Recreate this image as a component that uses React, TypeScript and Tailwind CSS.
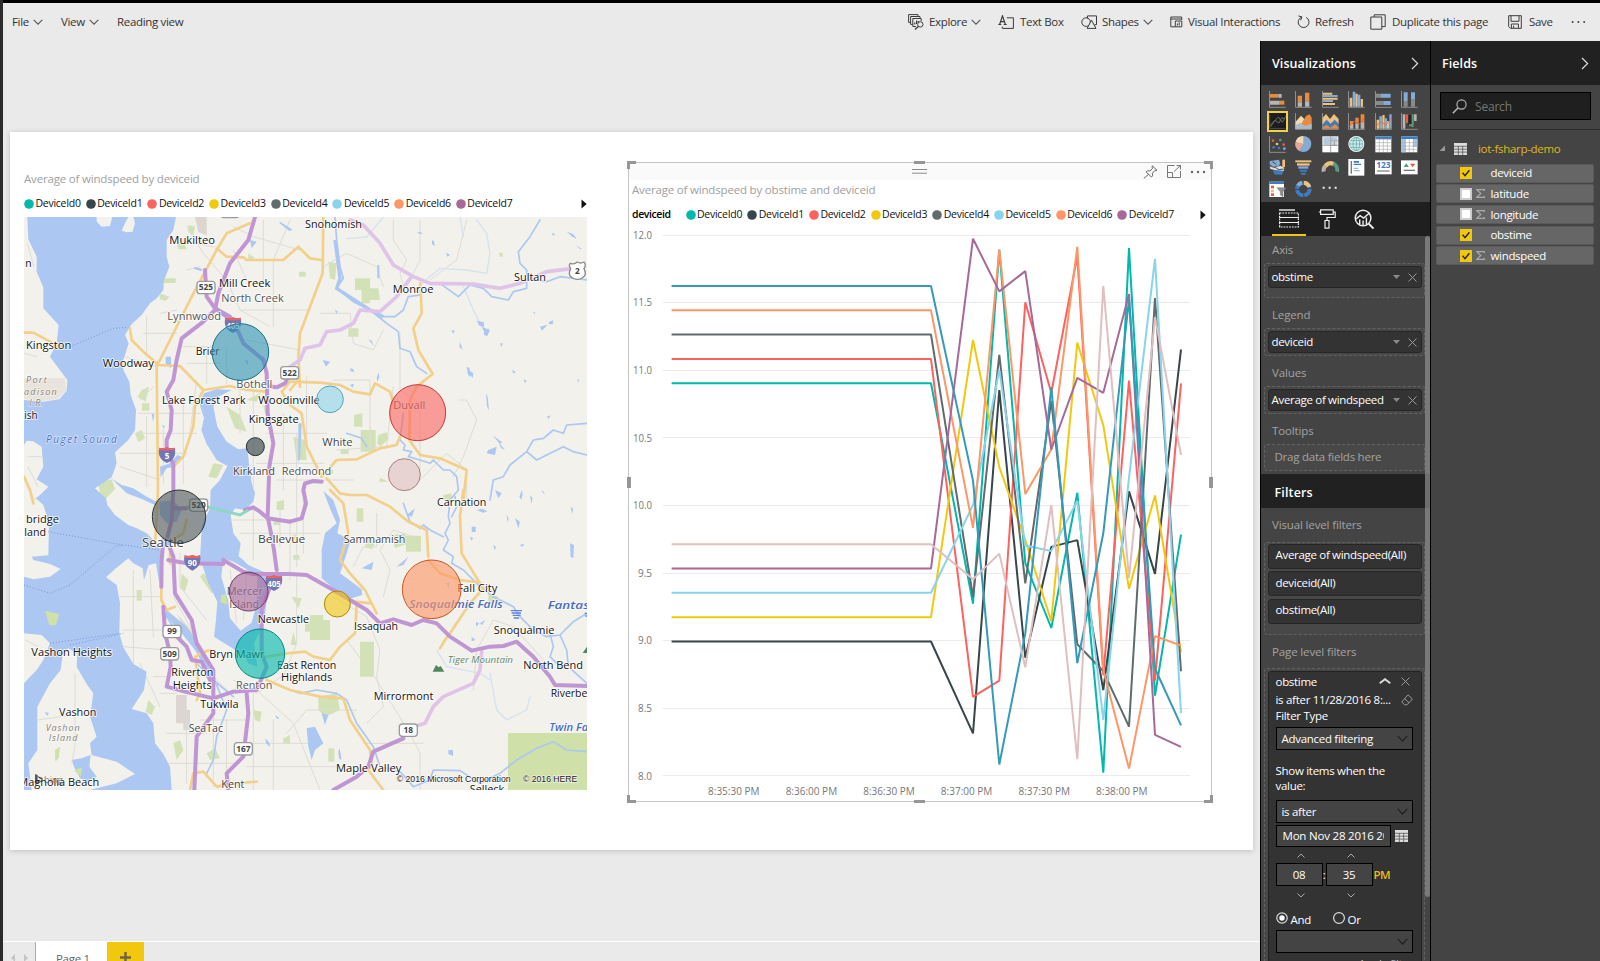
import React from "react";

const COLORS = {
  teal: "#01B8AA",
  dark: "#374649",
  red: "#FD625E",
  yellow: "#F2C80F",
  gray: "#5F6B6D",
  sky: "#8AD4EB",
  orange: "#FE9666",
  purple: "#A66999",
  blue: "#3599B8",
  pink: "#DFBFBF",
};

const DEVICES = [
  COLORS.teal,
  COLORS.dark,
  COLORS.red,
  COLORS.yellow,
  COLORS.gray,
  COLORS.sky,
  COLORS.orange,
  COLORS.purple,
];

/* ---------------------------------------------------------------- toolbar */

function Chevron({ className = "" }: { className?: string }) {
  return (
    <svg className={className} width="10" height="6" viewBox="0 0 10 6" fill="none" stroke="#555" strokeWidth="1.1">
      <path d="M0.7 0.8 5 5.1 9.3 0.8" />
    </svg>
  );
}

function MenuButton({ label, width, chevron, icon, iconWidth = "w-[22px]" }: {
  label: string; width: string; chevron?: boolean; icon?: React.ReactNode; iconWidth?: string;
}) {
  return (
    <button className={`flex shrink-0 items-center whitespace-nowrap ${width}`}>
      {icon && <span className={`flex shrink-0 ${iconWidth}`}>{icon}</span>}
      <span>{label}</span>
      {chevron && <Chevron className="ml-[4px] shrink-0" />}
    </button>
  );
}

const line = { fill: "none", stroke: "#3c3c3c", strokeWidth: 1 };

const ExploreIcon = (
  <svg width="16" height="16" viewBox="0 0 16 16" {...line}>
    <path d="M10 2.5V.6H.6v7.8h2M12 4.5V2.5H2.6v7.9H4.8M13.2 7V4.5H4.8v8H8" />
    <path d="M6.8 10.5v-2M8.6 10V6.6M10.4 8.5V7" strokeWidth="1.2" />
    <circle cx="12.3" cy="10.4" r="2.7" fill="#eaeaea" />
    <path d="M10.3 12.4 7 15.4" strokeWidth="1.4" />
  </svg>
);
const TextBoxIcon = (
  <svg width="17" height="15" viewBox="0 0 17 15" {...line}>
    <path d="M.3 9.5h3M5.7 9.5h3M1.6 9.5 4.5.9l2.9 8.6M2.6 6.7h3.9" strokeWidth="1.2" />
    <path d="M8.8 2.8h6.6v10.6H4.3v-1.8" />
  </svg>
);
const ShapesIcon = (
  <svg width="17" height="15" viewBox="0 0 17 15" {...line}>
    <path d="M6.5 3.4V.9h9v8.8h-2" />
    <circle cx="5.1" cy="7.1" r="4.3" />
    <path d="M10.5 5.2 15 13.4H6.1z" fill="#eaeaea" />
  </svg>
);
const InteractionsIcon = (
  <svg width="13" height="12" viewBox="0 0 13 12" {...line}>
    <path d="M11.7 4V1H.8v9.8h4.4M.8 3h10.9" />
    <path d="M5.3 5h6.5v5.8H5.3zM7.3 9.5v-2M9.2 9.5V6.2" />
  </svg>
);
const RefreshIcon = (
  <svg width="13" height="14" viewBox="0 0 13 14" {...line}>
    <path d="M4.6 2.1a5.4 5.4 0 1 0 4.6.3M1.4.9l3.5 1-1.2 3.4" />
  </svg>
);
const DuplicateIcon = (
  <svg width="16" height="16" viewBox="0 0 16 16" {...line}>
    <path d="M4.2 3V.8h11v11.8H12" />
    <path d="M.8 3h11v12.2H.8z" />
  </svg>
);
const SaveIcon = (
  <svg width="14" height="14" viewBox="0 0 14 14" {...line}>
    <path d="M.7.7h12.6v12.6H2.4L.7 11.6zM3 .7v5.6h8V.7M3.4 13.3V9h7v4.3M5.6 13V10.6" />
  </svg>
);

function Toolbar() {
  return (
    <div className="flex h-[38px] shrink-0 items-center pl-[9px] text-[11.5px] tracking-[-0.33px] text-[#333]">
      <MenuButton label="File" width="w-[49px]" chevron />
      <MenuButton label="View" width="w-[56px]" chevron />
      <MenuButton label="Reading view" width="w-[791px]" />
      <MenuButton label="Explore" width="w-[90px]" chevron icon={ExploreIcon} iconWidth="w-[21px]" />
      <MenuButton label="Text Box" width="w-[83px]" icon={TextBoxIcon} />
      <MenuButton label="Shapes" width="w-[89px]" chevron icon={ShapesIcon} iconWidth="w-[21px]" />
      <MenuButton label="Visual Interactions" width="w-[127px]" icon={InteractionsIcon} iconWidth="w-[18px]" />
      <MenuButton label="Refresh" width="w-[73px]" icon={RefreshIcon} iconWidth="w-[18px]" />
      <MenuButton label="Duplicate this page" width="w-[138px]" icon={DuplicateIcon} iconWidth="w-[22px]" />
      <MenuButton label="Save" width="w-[63px]" icon={SaveIcon} iconWidth="w-[21px]" />
      <svg width="16" height="4" viewBox="0 0 16 4" fill="#444">
        <circle cx="1.6" cy="2" r="1" /><circle cx="7.4" cy="2" r="1" /><circle cx="13.2" cy="2" r="1" />
      </svg>
    </div>
  );
}

/* -------------------------------------------------------------------- map */

const WATER = [
  "M82 51H528L520 90 500 120 500 170 508 200 492 240 490 270 470 295 450 310 425 345 395 372 375 405 386 430 370 480 370 510 388 545 392 585 408 630 405 690 385 720 345 757 350 790 335 832 308 850 285 865 318 895 322 915 345 945 385 975 410 985 440 1000 462 1022 482 1050 484 1090 478 1150 468 1090 446 1095 432 1140 428 1105 400 1090 385 1075 345 1107 318 1132 350 1155 360 1210 358 1300 370 1342 400 1392 440 1415 432 1470 395 1527 440 1540 460 1570 465 1630 490 1662 510 1700 515 1770 H72 V1450 L110 1410 130 1380 150 1330 125 1305 72 1300 V1130 L100 1138 150 1130 182 1107 150 1092 100 1080 95 1070 145 1066 147 970 130 915 108 895 120 885 145 860 110 838 130 800 125 740 100 724 80 722 72 735 V600 L130 605 178 598 200 572 202 540 150 470 170 430 176 375 130 325 130 262 110 215 110 170 85 118z",
  "M598 610 612 580 650 568 695 570 655 590 640 620 652 680 680 725 715 748 742 745 748 800 755 850 765 880 760 905 735 930 705 925 692 945 700 1000 722 1030 716 1068 745 1095 800 1120 802 1180 792 1270 762 1330 772 1400 745 1390 735 1368 690 1340 642 1310 648 1260 652 1205 625 1150 600 1075 606 975 630 925 632 870 660 840 682 798 650 780 620 732 604 690 612 655z",
  "M970 873 1000 900 1020 960 1012 1000 1052 1020 1040 1060 1020 1120 1085 1168 1087 1185 1050 1196 1000 1165 965 1135 965 1050 975 1000 1010 970 992 930z",
  "M480 800 510 790 532 765 545 770 520 800 500 805 482 832zM478 905 520 900 545 930 530 965 500 970 480 945zM335 836 365 855 400 865 440 890 470 905 465 915 420 895 380 880z",
  "M500 1230 560 1280 600 1340 640 1430 628 1432 585 1350 545 1300 496 1245zM497 470h16v34l-16-12zM895 670h10l-4 100-6 20zM920 1585 945 1580 960 1610 970 1630 945 1650 935 1680 925 1640zM965 1540 985 1545 975 1575zM1220 945 1245 925 1235 950z",
  "M1085 1105 1120 1085 1115 1110zM1190 1100 1225 1070 1210 1095zM1445 380 1470 390 1460 410zM1405 510 1420 520 1418 535zM1465 750 1490 740 1485 765 1460 760zM750 120 770 125 755 145zM583 200 607 207 605 213 583 208zM968 480 990 485 978 500zM1485 870 1505 880 1495 895zM1545 955 1560 965 1555 985zM1710 1030 1722 1035 1720 1075 1712 1070zM1415 980h12v16h-12z",
  "M1430 362l22 5 0 14-14-4zM1452 395l14-10-4 22-10-2zM1354 390l10 2-4 10zM1620 380l22-6-16 18zM1648 365l12-4-2 12-12-1zM1380 425l-2 16 10 8zM1500 430l8 0-4 12zM1400 500l8 4 6 28-10-8zM1458 580l5 10 4 40-6-10zM1478 706l30 22-10 2zM1495 725l20 25-12-6zM1535 510l12 5-6 6zM1570 538l10 4-4 8zM1640 650l12-4-6 10zM1732 538l6 2-4 8zM1296 120l6 4 2 14-8-6zM1338 158l12 6-8 6zM1655 98l10 4-6 6zM1700 95l20 8 10 14-12-6zM1728 135l12 12 6 0zM1250 95l20 4-10 4zM1132 195h6v40h-6zM1600 335l6 2-4 6z",
  "M1050 555l12-4-4 12zM1130 535l6-18 2 14-6 14zM1050 505l10 2 2 10-10-4zM1105 418l10 4 6 16zM1005 330l8 4-4 8zM1430 930l16-4 16 8-12 4zM1520 945l6 10-4 12zM1558 890l8-20 2 14-4 16zM1590 885l8 10-4 16zM1625 868l10 14-6-2zM1712 920l8 6-4 16zM1480 1035l8 6-4 10zM1560 1035l14-4-8 10zM1410 1010l10 4-6 8zM1340 1150l8-4-2 20zM1345 1650h14v18l-14-6zM1428 1265l10 6-10 8zM1015 1655l4-10 6 36-8-6zM795 1615l12 12 4 14-12-10zM825 1545l14 10-8 2zM1415 1310l12 10-12 4zM1440 1270l16-10-10 16zM455 640l8 4-4 22zM486 675l8 2-2 10zM735 480l10 2-2 14zM785 470l6-2-6 18zM840 65l38 24-10 4-30-24z",
];

const ISLANDS = [
  "M290 51H337L330 78 305 80 290 65zM365 92 375 70 385 51H400L405 70 398 95 380 97z",
  "M205 1345 232 1362 230 1400 262 1455 280 1480 270 1550 290 1610 270 1630 275 1665 350 1685 405 1722 350 1750 270 1770 H95 L85 1690 112 1650 112 1520 150 1450 182 1410 188 1362z",
  "M670 1075 700 1085 735 1105 772 1130 770 1210 755 1268 722 1292 690 1255 684 1200 664 1130z",
];

const GREENS = [
  "M492 235h35v14h-35zM425 570l22-10-10 45-24-15zM426 610h22v22h-22zM680 620l40 25 20 50-35-10zM405 700l20-10 10 25-20 12zM740 600l40-20-10 25zM295 850l40-12 10 30-40 40zM640 790l30 5-20 40-25-5z",
  "M1065 235h45v30h25l5 35h-30v10h-25v-40h-20zM1045 385h30l0 25h-30zM1062 645l25-5v40h-25zM1082 690h45v65h-45zM897 215h20v15h-20zM985 185l25 5-5 50-15-5zM880 710l35 10 5 60h-30z",
  "M1218 1007h45v48h-45zM930 1245h40v15h20v60h-60v-25h-15v-30h15zM1080 1325h42v105h-42zM1175 1005l40-5 10 30-40 15zM955 1490l55-10 10 50-45 20-20-20zM875 1190l30 5-10 30zM1465 1180l30 10-5 20-25-5zM1330 885l25-5v20h-25zM1070 925l20 0v40h-20z",
  "M545 1120l20 20-10 35-15-10zM600 1130l10-10 45 50-20 10zM410 1170h15v32h-15zM620 1660l25-15 15 30-30 5zM520 1630l20-10 10 30-20 30zM850 1615l20-10v25h-20zM760 1530l25 5-5 30-15-5zM655 1185l15-5 12 30-25 10zM700 900h40v25h-35zM830 905l22-5v30h-22zM445 1500l20 20-10 25-18-10z",
  "M790 615l20 10-14 20zM745 160l20 14-20 8zM530 130l24 4 6 14-24 0zM565 75l20 5-5 25-15-8zM478 280l30 10-10 12-18-4zM1498 158h10v12h-10zM1135 705l25-8 6 20-24 22-10-8zM1022 748h24v14h-24zM985 810h14v12h-14zM870 1010l20-8 0 20zM880 1065h18v14h-18zM1100 1010l26 16-10 22-20-6zM880 1295l10 40h-18zM985 1645h18v40h-18zM1165 845l-28 0 4-12zM360 985l14 6-6 14zM820 955h20v20h-20z",
];

const MINOR = [
  "M72 460 110 470M420 600 460 560M375 470 470 500M440 350v110M430 400h100M560 80l50 80 60 70M530 120 640 140M560 210 600 200M530 330 480 340M700 80 760 110 900 150M700 150 740 240 790 260M790 60v190M870 60l-50 120v200M680 240 720 330 810 380M720 330h210M740 420 900 450",
  "M415 640H600M410 700H590M360 760H560M360 800l120 40M440 650v210M490 690v160M550 600v250M590 540l-20 160M620 450v100M680 440v110M550 440h90M560 490h100M720 560v140M760 560v300M850 640v230M800 700h180M770 790h200M830 840h230M890 700v400",
  "M970 200l70-40 90 40 20 60M1180 60v60l40 60-20 40 10 40M1260 60l0 120-20 40M1400 60l-30 120-80 60M960 340l90 0 10 90 60 20 30-60M1180 560l-20 180-150 10M920 530v200M1000 540h110v200",
  "M1260 840l80-80 60 50 0 90M1200 400l0 170 60 40 0 200M1380 600h20l30 60-40 110-30 60M1240 1010l-60-20-40 60 30 60-20 80",
  "M340 950l60 90M400 1110v280M360 1190h120M370 1290h130M370 1340l130 10M420 1390l60 130M460 1430h60M450 1110l10 200M540 1060v100l80 100M520 1190l100 180M480 1480h50M560 1540v210M500 1600h120M640 1540v220M480 1690h240M600 1560h150M680 1560v210M760 1480v290M820 1560v210M740 1630h190M740 1700h320M780 1480l100 90 80 200",
  "M700 960h180M720 1000h240M760 920v160M840 930v110M870 960v180M910 900v160M700 1440l70 40 90-60M640 1430l60 60M890 1130v200l-40 100M1000 1190l100 60 40 100-10 80 20 90-50 50M1040 1320l90 120 100 160 30 60v110M1130 940v100h-40l-30 60M1430 1350l-10 120M1430 1350l50-90 60 20 90 100M1090 1630h180M860 1600l60-70 150 0",
  "M100 900l40-20M84 800l30 60M84 770h40M75 1320l40 20M130 1520l90 10 40-20M225 1420l0 220-10 60M210 1400v60M110 1740l100 0M300 1740l60-30M82 130l20 70",
];

const FAINT_RIVERS = [
  "M1430 60l30 40 10 60-10 60-60-10-80-5-60 50M1390 260l30 70 20 40M1150 51l-50 60-60 5M1470 1420 1490 1530 1520 1560 1580 1530 1590 1490M1310 1350 1340 1400 1440 1420 1470 1440M1380 50l10 60",
];

const RIVERS = [
  "M1005 51 1010 120 1020 200 1030 235 1010 265 1060 305 1110 330 1140 350 1185 350 1210 330 1225 290 1260 285",
  "M1110 330 1160 370 1195 395 1200 445 1230 455 1250 500 1280 520",
  "M1320 250 1375 290 1410 255 1450 265 1475 290 1525 300 1540 275 1580 265 1580 210 1560 190 1555 155 1590 110 1620 60",
  "M1580 235 1640 245 1680 230 1761 240",
  "M1210 910 1230 965 1260 985 1270 975 1290 990 1330 1010M1210 640 1200 720 1215 735 1210 750 1235 755 1225 770 1260 780 1290 790 1300 780 1330 810 1350 810 1370 830 1375 870 1350 900 1345 950 1350 970 1335 1000 1345 1020 1330 1050 1360 1070 1355 1090 1390 1110 1440 1160 1480 1190 1540 1220 1560 1250 1600 1290",
  "M1470 900 1480 840 1510 830 1530 795 1580 755 1600 720 1630 715 1660 690 1690 700 1700 675 1761 670M1580 755 1610 780 1640 765 1690 740 1720 755 1761 765M1355 950 1370 920 1365 890",
  "M1600 1290 1640 1310 1680 1305 1720 1265 1761 1240M1680 1305 1700 1350 1705 1400 1761 1450M1650 1300 1660 1340 1650 1370 1680 1400",
  "M870 1470 900 1480 950 1470 1010 1480 1040 1500 1070 1570 1120 1640 1140 1700 1200 1715 1240 1760 1290 1740 1300 1710 1380 1712 1440 1750 1500 1720 1550 1680 1610 1645 1660 1625 1700 1650 1761 1655",
  "M640 1430 660 1480 680 1530 650 1610 640 1680 620 1720M500 1250 540 1310 580 1380 640 1440 700 1490M1040 700 1085 715 1100 740",
];

const YELLOW_ROADS = [
  "M750 70 680 100 650 150 570 300 480 480 470 495 474 870 465 1040",
  "M650 145 680 170 730 172 740 180 850 180 895 140M895 140 930 175 965 180M970 51 968 220 900 400 895 470 900 560",
  "M390 385 395 420 430 455 470 490M470 495 540 498 610 570 690 558 740 570 800 575",
  "M610 570 585 620 580 680 550 770 520 800M850 570 870 545M845 575 870 615 905 640 920 740 965 830",
  "M72 398H100L160 430 175 440M72 830 90 870 100 910",
  "M870 545 960 548 1020 555 1060 575 1110 583 1125 550 1170 575 1180 610",
  "M870 570 895 540M1260 250 1262 270 1265 340 1240 385 1255 450 1298 522 1250 560 1230 600 1228 720 1260 765 1320 775 1400 810 1390 900",
  "M965 830 1010 780 1070 778 1140 745 1190 735 1200 710M980 835 1020 880 1050 885 1100 885 1170 920 1225 965 1280 990 1285 1070M990 870 1030 910 1045 1000 1020 1080 1050 1120 1095 1170 1110 1200 1130 1240M1065 1205 1115 1210M1070 1210 1068 1260M1070 1210 1065 1300 1020 1340 990 1380 940 1370 915 1355 860 1360 800 1370M1390 870 1380 950 1385 1060 1440 1150 1450 1165 1410 1210 1350 1300 1335 1320 1320 1345",
  "M1285 1080 1320 1120 1380 1140 1440 1148",
  "M800 1440 870 1470 960 1490 1030 1495 1050 1560 1110 1650 1115 1690 1105 1710 1150 1770",
  "M485 1080 484 1200 500 1230 525 1220M560 960 550 1000 500 1030M510 1060v30M585 1370 600 1480 590 1500M630 1350 600 1360 580 1380M570 1770 580 1720 610 1715 650 1760 700 1750 770 1745",
];

const LIGHT_PURPLE = [
  "M1050 60 1090 75 1140 130 1180 195 1240 230 1290 250 1420 252 1500 265 1560 250 1640 215 1720 205",
  "M1235 230 1190 290 1140 335 1080 330 1060 370 1020 390 980 395 960 435 915 445 900 480 870 500",
  "M1445 1355 1440 1410 1420 1450 1330 1490 1300 1520 1275 1570 1240 1580",
];

const PURPLE = [
  "M765 51 745 120 690 190 655 280 645 330 610 365 545 415 530 480 520 540 500 575 515 630 512 690 500 720 500 760 520 790 520 870 515 960 500 1020 520 1070 525 1180 575 1260 590 1330 640 1410 640 1480 640 1540 590 1610 583 1770",
  "M615 210 620 290 645 325 690 350M645 325 680 350 715 395 730 430 790 480 800 520 803 640 820 730 808 800 803 950 815 1010 822 1050 830 1110",
  "M490 1020 485 1080 484 1160M490 1220 495 1300 510 1360 512 1400 500 1460 555 1475 640 1495 700 1475 770 1470 800 1400 785 1360 785 1230 810 1160",
  "M530 1310 560 1340 575 1380 605 1385 630 1440M740 1480 745 1540 730 1670 680 1720 685 1770",
  "M505 1080 560 1090 670 1092M670 1080 730 1115 760 1122 870 1122 920 1125 1000 1170 1100 1230 1140 1270 1180 1258 1235 1275 1270 1260 1310 1270 1350 1310 1415 1352 1470 1340 1510 1338 1550 1325 1600 1370 1650 1430 1665 1455 1761 1458",
  "M1210 1615 1120 1655 1105 1700 1070 1730 1000 1770",
  "M735 930 760 922 780 935 803 955 870 965 905 955 918 910 910 870 915 850 940 843 965 845M525 925 560 925M800 558 830 562 855 550 865 530",
];

const SHIELD_CITY = [
  { t: "525", x: 618, y: 262 }, { t: "522", x: 869, y: 518 }, { t: "520", x: 596, y: 915 },
  { t: "99", x: 516, y: 1294 }, { t: "509", x: 509, y: 1361 }, { t: "167", x: 730, y: 1646 },
  { t: "18", x: 1225, y: 1590 }, { t: "", x: 690, y: 34 },
];
const SHIELD_INTER = [
  { t: "405", x: 699, y: 374 }, { t: "5", x: 501, y: 764 }, { t: "90", x: 577, y: 1087 }, { t: "405", x: 822, y: 1148 },
];

type Label = [string, number, number, number, string?];
const PLACES: Label[] = [
  ["Snohomish", 915, 1086, 84], ["Mukilteo", 508, 645, 131], ["Mill Creek", 657, 811, 259],
  ["North Creek", 664, 851, 306, "#555"], ["Lynnwood", 502, 663, 359, "#555"], ["Brier", 587, 659, 464],
  ["Kingston", 78, 214, 446], ["Woodway", 308, 462, 499], ["Bothell", 709, 817, 562, "#555"],
  ["Lake Forest Park", 486, 737, 610], ["Woodinville", 775, 960, 610], ["Kingsgate", 746, 896, 668],
  ["Kirkland", 699, 825, 825, "#444"], ["Redmond", 845, 994, 825, "#555"], ["n", 76, 95, 200], ["ish", 73, 113, 656],
  ["Monroe", 1178, 1300, 277], ["Sultan", 1542, 1638, 241], ["Duvall", 1180, 1276, 627, "#555"],
  ["White", 967, 1058, 737, "#444"], ["Carnation", 1311, 1459, 918], ["bridge", 78, 177, 968], ["land", 73, 138, 1006],
  ["Bellevue", 774, 916, 1028, "#444"], ["Sammamish", 1031, 1216, 1029, "#444"], ["Mercer", 680, 789, 1184, "#555"],
  ["Island", 688, 777, 1222, "#555"], ["Newcastle", 773, 927, 1267], ["Fall City", 1372, 1492, 1174],
  ["Issaquah", 1062, 1194, 1290], ["Snoqualmie", 1481, 1663, 1302], ["North Bend", 1570, 1749, 1406],
  ["Riverbend", 1652, 1800, 1489], ["Mirrormont", 1121, 1300, 1500], ["Maple Valley", 1008, 1204, 1715],
  ["Vashon Heights", 94, 336, 1368], ["Bryn Mawr", 628, 793, 1373], ["East Renton", 831, 1009, 1405],
  ["Highlands", 843, 997, 1442], ["Riverton", 514, 640, 1428], ["Heights", 518, 635, 1465], ["Renton", 708, 817, 1465, "#555"],
  ["Tukwila", 601, 716, 1524], ["Vashon", 177, 289, 1546], ["SeaTac", 566, 669, 1594, "#444"],
  ["Magnolia Beach", 55, 298, 1757], ["Kent", 664, 733, 1763, "#444"], ["Selleck", 1409, 1513, 1779],
];

const BUBBLES = [
  { x: 721, y: 456, r: 85, f: "#2a93b4", s: "#1c6e8a", o: 0.6 },
  { x: 990, y: 598, r: 40, f: "#8AD4EB", s: "#4fa6c0", o: 0.6 },
  { x: 1253, y: 638, r: 84, f: "#FD625E", s: "#c43733", o: 0.6 },
  { x: 766, y: 740, r: 27, f: "#374649", s: "#23302f", o: 0.65 },
  { x: 1213, y: 824, r: 48, f: "#DFBFBF", s: "#a88080", o: 0.6 },
  { x: 537, y: 950, r: 80, f: "#4b5658", s: "#2c3536", o: 0.6 },
  { x: 746, y: 1175, r: 58, f: "#A66999", s: "#6f3b65", o: 0.62 },
  { x: 1012, y: 1212, r: 39, f: "#F2C80F", s: "#ad8c00", o: 0.6 },
  { x: 1295, y: 1168, r: 88, f: "#FE9666", s: "#cc5520", o: 0.62 },
  { x: 780, y: 1361, r: 74, f: "#01B8AA", s: "#01897e", o: 0.62 },
];

function Strokes({ paths, color, width }: { paths: string[]; color: string; width: number }) {
  return (
    <g fill="none" stroke={color} strokeWidth={width} strokeLinejoin="round" strokeLinecap="round">
      {paths.map((d, i) => <path key={i} d={d} />)}
    </g>
  );
}

function BubbleMap() {
  return (
    <svg className="block shrink-0" width="563" height="573" viewBox="72 51 1689 1719" fontFamily="'Open Sans', 'Noto Sans', sans-serif">
      <rect x="72" y="51" width="1689" height="1719" fill="#f2f1ec" />
      <path d="M1524 1599H1761V1770H1524z" fill="#cfe0a9" />
      <path d="M585 51h35v55l-25-10zM528 1485h32v45h10v60h-20v-20h-22zM530 1240l50 60 10 40-20-20z" fill="#ddd5d0" />
      <g fill="#d2e2b6">{GREENS.map((d, i) => <path key={i} d={d} />)}</g>
      <Strokes paths={MINOR} color="#dddcd5" width={3} />
      <Strokes paths={FAINT_RIVERS} color="#d6e1f2" width={4} />
      <g fill="#abc7f2">{WATER.map((d, i) => <path key={i} d={d} />)}</g>
      <path d="M72 535H145L195 535 198 572 172 596 130 602 72 597z" fill="#e8e3dc" />
      <g fill="#f2f1ec">{ISLANDS.map((d, i) => <path key={i} d={d} />)}</g>
      <path d="M215 1680 245 1675 272 1665 268 1700 290 1730 262 1745 240 1735 222 1700zM135 1535l12 5-6 8z" fill="#abc7f2" />
      <path d="M135 1232l43 10-10 34-20 0zM664 1185l14-5 4 34-22-8zM165 1650l15-10-4 35-10 10zM222 1710l25-8-5 28z" fill="#cfe0a9" />
      <path d="M225 1420V1640L215 1690M112 1560 220 1545M690 1110l20 160M740 1120l-10 140" stroke="#dddcd5" strokeWidth="3" fill="none" />
      <Strokes paths={RIVERS} color="#abc7f2" width={5} />
      <path d="M1005 120 1020 235 1010 265 1110 330 1150 350" stroke="#abc7f2" strokeWidth="10" fill="none" />
      <g stroke="#7a96d8" strokeWidth="3" strokeDasharray="3 6" fill="none">
        <path d="M215 438 340 385 385 382M145 995 350 1032 480 1050M72 1155 150 1180 210 1155 345 1040 370 1035M150 1330 360 1300M210 1335 370 1300" />
      </g>
      <Strokes paths={YELLOW_ROADS} color="#f3d08a" width={8} />
      <Strokes paths={LIGHT_PURPLE} color="#dfc3e8" width={11} />
      <Strokes paths={PURPLE} color="#c095d4" width={12} />
      <path d="M560 922 600 915 720 945 745 930" stroke="#8bd8c4" strokeWidth="9" fill="none" />
      {SHIELD_CITY.map((s, i) => (
        <g key={i}>
          <rect x={s.x - 27} y={s.y - 18} width="54" height="37" rx="9" fill="#fff" stroke="#9a9a9a" strokeWidth="4" />
          <text x={s.x} y={s.y + 9} fontSize="25" fontWeight="700" textAnchor="middle" fill="#444">{s.t}</text>
        </g>
      ))}
      <path d="M1712 190q10 5 20-4 10 6 20 0 8 8 0 20 10 20-6 28-6 4-14 4-8 0-14-4-16-8-6-28-8-12 0-16z" fill="#fff" stroke="#8a8a8a" strokeWidth="4" />
      <text x="1732" y="222" fontSize="25" fontWeight="700" textAnchor="middle" fill="#444">2</text>
      {SHIELD_INTER.map((s, i) => (
        <g key={i}>
          <path d={`M${s.x - 23} ${s.y - 21}q12 4 23-1 11 5 23 1 8 32-23 46-31-14-23-46z`} fill="#7176b4" />
          <path d={`M${s.x - 23} ${s.y - 21}q12 4 23-1 11 5 23 1v8h-46z`} fill="#f0605c" />
          <text x={s.x} y={s.y + 12} fontSize="24" fontWeight="700" textAnchor="middle" fill="#fff">{s.t}</text>
        </g>
      ))}
      <g fontSize="35" fontWeight="500" paintOrder="stroke" stroke="#ffffff" strokeOpacity="0.75" strokeWidth="6" strokeLinejoin="round">
        {PLACES.map(([t, a, b, y, c]) => (
          <text key={t + a} x={a} y={y + 1} textLength={b - a} lengthAdjust="spacingAndGlyphs" fill={c || "#111"}>{t}</text>
        ))}
        <text x="426" y="1041" fontSize="38" textLength="126" lengthAdjust="spacingAndGlyphs" fill="#444">Seattle</text>
      </g>
      <g fontStyle="italic" fontSize="30" fontWeight="500" paintOrder="stroke" stroke="#fff" strokeOpacity="0.6" strokeWidth="4">
        <text x="138" y="729" textLength="212" fill="#4a6cc4">Puget Sound</text>
        <g fill="#4a6cc4" fontWeight="600">
          <text x="1228" y="1223" textLength="280" lengthAdjust="spacingAndGlyphs">Snoqualmie Falls</text>
          <text x="1643" y="1226" textLength="170" lengthAdjust="spacingAndGlyphs">Fantastic</text>
          <text x="1648" y="1592" textLength="150" lengthAdjust="spacingAndGlyphs">Twin Falls</text>
        </g>
        <g fill="#877c72" fontSize="27">
          <text x="78" y="549" textLength="62">Port</text>
          <text x="72" y="585" textLength="98">adison</text>
          <text x="88" y="617" textLength="42">I.R.</text>
          <text x="137" y="1593" textLength="102">Vashon</text>
          <text x="146" y="1622" textLength="86">Island</text>
        </g>
        <text x="1343" y="1388" textLength="196" lengthAdjust="spacingAndGlyphs" fontSize="28" fill="#5a8a6c">Tiger Mountain</text>
      </g>
      <path d="M1298 1415 1308 1395 1316 1402 1322 1398 1333 1415zM1748 1359 1761 1340V1359z" fill="#4f8660" />
      <path d="M1532 1232h34M1535 1239h28M1538 1246h24M1541 1254h16M1754 1240h8M1756 1248h6" stroke="#5f83d8" strokeWidth="4" />
      {BUBBLES.map((b, i) => (
        <circle key={i} cx={b.x} cy={b.y} r={b.r} fill={b.f} fillOpacity={b.o} stroke={b.s} strokeWidth="3" />
      ))}
      <path d="M105 1722 113 1725V1748L126 1740 116 1734 113 1728 128 1734V1742L113 1752 105 1747z" fill="#333" opacity=".8" />
      <text x="132" y="1750" fontSize="28" fill="#555" opacity=".7">bing</text>
      <g fontFamily="'Liberation Sans', Arial, sans-serif" fontSize="28" fill="#222" paintOrder="stroke" stroke="#fff" strokeOpacity=".7" strokeWidth="4">
        <text x="1190" y="1745" textLength="342" lengthAdjust="spacingAndGlyphs">© 2016 Microsoft Corporation</text>
        <text x="1569" y="1745" textLength="163" lengthAdjust="spacingAndGlyphs">© 2016 HERE</text>
      </g>
    </svg>
  );
}

/* ------------------------------------------------------------- line chart */

const TIMES = [671.3, 930.7, 972.7, 999, 1025, 1051, 1077, 1103, 1128.7, 1154.7, 1180.7];
const SERIES: [string, number[]][] = [
  [COLORS.teal, [10.9, 9.27, 11.89, 9.57, 9.09, 10.09, 8.02, 11.9, 8.59, 9.78]],
  [COLORS.dark, [8.99, 8.31, 10.85, 8.87, 9.69, 9.74, 8.63, 10.1, 9.49, 11.15]],
  [COLORS.red, [11.08, 8.58, 8.7, 11.5, 10.83, 11.84, 8.74, 10.92, 8.7, 10.9]],
  [COLORS.yellow, [9.17, 11.22, 10.28, 9.74, 9.14, 11.2, 10.59, 9.38, 10.07, 8.91]],
  [COLORS.gray, [11.26, 9.32, 11.11, 9.42, 10.77, 8.97, 8.77, 8.36, 11.53, 8.77]],
  [COLORS.sky, [9.35, 10.0, 11.0, 9.7, 9.66, 10.03, 8.41, 10.2, 11.82, 8.46]],
  [COLORS.orange, [11.44, 9.83, 11.89, 10.08, 10.41, 11.91, 8.78, 8.05, 9.03, 8.96]],
  [COLORS.purple, [9.53, 11.97, 11.58, 11.73, 10.41, 10.94, 10.83, 11.56, 8.3, 8.21]],
  [COLORS.blue, [11.62, 10.18, 8.08, 9.05, 10.87, 8.83, 9.79, 11.52, 8.79, 8.37]],
  [COLORS.pink, [9.71, 9.45, 9.64, 8.8, 10.0, 8.12, 11.62, 9.46, 11.39, 10.37]],
];
const yOf = (v: number) => 234.6 + (12 - v) * 135.18;
const X_LABELS = ["8:35:30 PM", "8:36:00 PM", "8:36:30 PM", "8:37:00 PM", "8:37:30 PM", "8:38:00 PM"];

function LineChart() {
  const ticks = [12, 11.5, 11, 10.5, 10, 9.5, 9, 8.5, 8];
  return (
    <svg className="block shrink-0" width="582" height="575" viewBox="629 225 582 575" fontFamily="'Open Sans', 'Noto Sans', sans-serif" fontSize="10.5" fill="#777">
      {ticks.map((t) => (
        <g key={t}>
          <line x1="662.5" x2="1190" y1={Math.round(yOf(t)) + 0.5} y2={Math.round(yOf(t)) + 0.5} stroke="#ebebeb" />
          <text x="652" y={yOf(t) + 4.3} textAnchor="end" textLength={t >= 10 ? 19 : 14} lengthAdjust="spacingAndGlyphs">{t.toFixed(1)}</text>
        </g>
      ))}
      {X_LABELS.map((l, i) => (
        <text key={l} x={733.8 + i * 77.6} y="795.3" textAnchor="middle" textLength="51.5" lengthAdjust="spacingAndGlyphs">{l}</text>
      ))}
      {SERIES.map(([c, v]) => (
        <polyline
          key={c}
          fill="none"
          stroke={c}
          strokeWidth="2"
          strokeLinejoin="bevel"
          points={TIMES.map((x, i) => `${x + 0.3},${yOf(v[Math.max(0, i - 1)]).toFixed(1)}`).join(" ")}
        />
      ))}
    </svg>
  );
}

/* ----------------------------------------------------------------- canvas */

function Legend() {
  return (
    <div className="flex text-[10.5px] tracking-[-0.28px] text-[#111]">
      {DEVICES.map((c, i) => (
        <div key={c} className="flex w-[61.7px] shrink-0 items-center gap-[1.5px] whitespace-nowrap">
          <svg width="10" height="10" viewBox="0 0 10 10"><circle cx="5" cy="5" r="4.8" fill={c} /></svg>
          DeviceId{i}
        </div>
      ))}
    </div>
  );
}

const Arrow = () => <svg width="6" height="10" viewBox="0 0 6 10"><path d="M.5.5 5.7 5 .5 9.5z" fill="#111" /></svg>;

function MapVisual() {
  return (
    <section className="mt-[37px] w-[563px] shrink-0">
      <h2 className="h-[18px] text-[11.5px] leading-[19px] tracking-[-0.18px] text-[#a0a0a0]">Average of windspeed by deviceid</h2>
      <div className="flex h-[30px] items-center justify-between pt-[4px]">
        <Legend />
        <Arrow />
      </div>
      <BubbleMap />
    </section>
  );
}

function ChartVisual() {
  return (
    <section className="relative mt-[30px] h-[640px] w-[584px] shrink-0 border border-[#c4c4c4]">
      <div className="flex h-[17px] items-center bg-[#fafafa]">
        <svg className="ml-[283px]" width="15" height="5" viewBox="0 0 15 5" stroke="#8a8a8a"><path d="M0 .5h15M0 4.2h15" /></svg>
        <svg className="ml-[216px]" width="15" height="14" viewBox="0 0 15 14" fill="none" stroke="#666">
          <path d="M9.2.8 14 5.2l-1.2.5-1-.2-2.4 2.7.2 2.6-1.2 1.2L3.2 7l1.2-1.2 2.6.1 2.5-2.4-.3-1.2zM5.6 9.3.8 13.4" />
        </svg>
        <svg className="ml-[9px]" width="14" height="13" viewBox="0 0 14 13" fill="none" stroke="#777">
          <path d="M7.5.5H.5v12h13V6M.5 7.5h5v5M7 6.5 13.5.5M9.5.5h4v4" />
        </svg>
        <svg className="ml-[9px]" width="16" height="4" viewBox="0 0 16 4" fill="#666">
          <circle cx="2" cy="2" r="1.2" /><circle cx="8" cy="2" r="1.2" /><circle cx="14" cy="2" r="1.2" />
        </svg>
      </div>
      <h2 className="h-[20px] pl-[3px] text-[11.5px] leading-[19px] tracking-[-0.18px] text-[#a0a0a0]">Average of windspeed by obstime and deviceid</h2>
      <div className="flex h-[25px] items-center pl-[3px] pt-[5px]">
        <span className="w-[53.5px] shrink-0 text-[10.5px] font-semibold tracking-[-0.4px] text-black">deviceid</span>
        <Legend />
        <span className="ml-[21px]"><Arrow /></span>
      </div>
      <LineChart />
      <span className="absolute -left-[2px] -top-[2px] h-[8px] w-[9px] border-l-[3px] border-t-[3px] border-[#969696]" />
      <span className="absolute -right-[2px] -top-[2px] h-[8px] w-[9px] border-r-[3px] border-t-[3px] border-[#969696]" />
      <span className="absolute -bottom-[2px] -left-[2px] h-[8px] w-[9px] border-b-[3px] border-l-[3px] border-[#969696]" />
      <span className="absolute -bottom-[2px] -right-[2px] h-[8px] w-[9px] border-b-[3px] border-r-[3px] border-[#969696]" />
      <span className="absolute -top-[2px] left-[285px] h-[3px] w-[11px] bg-[#969696]" />
      <span className="absolute -bottom-[2px] left-[285px] h-[3px] w-[11px] bg-[#969696]" />
      <span className="absolute -left-[2px] top-[314px] h-[11px] w-[4px] bg-[#969696]" />
      <span className="absolute -right-[2px] top-[314px] h-[11px] w-[4px] bg-[#969696]" />
    </section>
  );
}

/* --------------------------------------------------- visualization gallery */

const O = "#e88b3c", G = "#b5b5b5", D = "#8a8a8a", Y = "#eec27c", B = "#84abd6", R = "#e0623c", BL = "#3d7cc0";
const axis = <path d="M1.5 0V49H50" stroke="#8f8f8f" strokeWidth="3" fill="none" />;

const GALLERY: React.ReactNode[] = [
  <g key="stacked-bar">{axis}<path d="M3 9h25v11H3z" fill={O} /><path d="M28 9h10v11H28zM3 29h27v12H3z" fill={G} /><path d="M3 20h10v0z" fill={G} /><path d="M30 29h16v12H30z" fill={O} /></g>,
  <g key="stacked-column">{axis}<path d="M8 14h13v20H8zM30 5h13v26H30z" fill={O} /><path d="M8 34h13v13H8zM30 31h13v16H30z" fill={G} /></g>,
  <g key="clustered-bar">{axis}<path d="M3 5h28v6H3zM3 20h44v6H3zM3 36h36v6H3z" fill={Y} /><path d="M3 12h44v6H3zM3 27h30v6H3z" fill={B} /></g>,
  <g key="clustered-column">{axis}<path d="M5 20h8v27H5zM22 8h7v39h-7zM38 24h7v23h-7z" fill={Y} /><path d="M14 2h8v45h-8zM29 11h8v36h-8z" fill={B} /></g>,
  <g key="full-bar">{axis}<path d="M3 8h15v12H3zM3 30h22v12H3z" fill={D} /><path d="M18 8h29v12H18zM25 30h22v12H25z" fill={B} /></g>,
  <g key="full-column">{axis}<path d="M8 4h12v26H8zM30 4h12v20H30z" fill={B} /><path d="M8 30h12v17H8zM30 24h12v23H30z" fill={D} /></g>,
  <g key="line"><path d="M2 6V47H50" stroke="#555" strokeWidth="2.5" fill="none" /><path d="M4 42 18 22 30 30 38 14 48 18M4 36 15 26 28 12 40 28 50 10" stroke="#777" strokeWidth="2.5" fill="none" /></g>,
  <g key="area">{axis}<path d="M2 26 18 8 34 24 48 20V47H2z" fill="#f3d9ae" /><path d="M20 30 34 8 44 4 50 14V47H14z" fill={O} /><path d="M2 36 16 30 30 38 50 32V47H2z" fill="#a9b9c9" /></g>,
  <g key="stacked-area">{axis}<path d="M2 14 12 3 24 18 36 3 50 18V34H2z" fill={Y} /><path d="M2 34 14 20 26 32 38 20 50 32V47H2z" fill={BL} /><path d="M2 42 14 36 26 44 38 34 50 42V47H2z" fill={O} /></g>,
  <g key="line-stacked">{axis}<path d="M6 24h10v12H6zM22 14h10v18H22zM38 4h11v24H38z" fill={O} /><path d="M6 34h10v13H6zM22 32h10v15H22zM38 28h11v19H38z" fill={G} /><path d="M2 42 20 24 34 34 50 14" stroke={R} strokeWidth="2.5" fill="none" /></g>,
  <g key="line-clustered">{axis}<path d="M5 20h8v27H5zM22 6h7v41h-7zM36 24h7v23h-7z" fill={Y} /><path d="M13 10h8v37h-8zM29 16h7v31h-7zM43 4h7v43h-7z" fill={B} /><path d="M2 40 18 26 32 36 50 14" stroke={R} strokeWidth="2.5" fill="none" /></g>,
  <g key="waterfall">{axis}<path d="M5 4h8v43H5zM39 4h8v20h-8z" fill={G} /><path d="M15 4h7v26h-7z" fill={R} /><path d="M22 6h10v32H22z" fill="#262626" /><path d="M24 34h8v6h-8zM32 4h6v38h-6z" fill="#5a9a80" /></g>,
  <g key="scatter">{axis}<circle cx="12" cy="14" r="4" fill={R} /><circle cx="34" cy="12" r="4" fill="#5a9a80" /><circle cx="24" cy="24" r="4" fill={Y} /><circle cx="14" cy="34" r="4" fill={BL} /><circle cx="30" cy="36" r="4" fill={BL} /><circle cx="44" cy="26" r="4" fill={R} /><circle cx="46" cy="38" r="4" fill={B} /></g>,
  <g key="pie"><circle cx="25" cy="24" r="24" fill={B} /><path d="M25 24V0A24 24 0 0 0 2 18z" fill="#f3d9ae" /><path d="M25 24 2 18A24 24 0 0 0 12 44z" fill="#e8a592" /></g>,
  <g key="treemap"><path d="M1 1h48v48H1z" fill="#fff" /><path d="M4 4h20v22H4zM27 4h19v10H27z" fill="#b4c9e2" /><path d="M27 17h9v12h-9zM38 17h8v12h-8z" fill="#c9d4e0" /><path d="M1 28h48M26 1v48M37 16v14M26 15h23" stroke="#777" strokeWidth="2" /></g>,
  <g key="map"><circle cx="25" cy="24" r="24" fill="#fff" /><circle cx="25" cy="24" r="20" fill="#d6ecf0" stroke="#58a39c" strokeWidth="2" /><ellipse cx="25" cy="24" rx="10" ry="20" fill="none" stroke="#58a39c" strokeWidth="2" /><path d="M5 24h40M8 14h34M8 34h34M25 4v40" stroke="#58a39c" strokeWidth="2" /></g>,
  <g key="table"><path d="M1 1h48v48H1z" fill="#fff" /><path d="M1 1h48v8H1z" fill={BL} /><path d="M1 20h48M1 30h48M1 40h48M13 9v40M25 9v40M37 9v40M1 10h48" stroke="#aaa" strokeWidth="2" /></g>,
  <g key="matrix"><path d="M1 1h48v48H1z" fill="#fff" /><path d="M1 1h48v8H1z" fill={BL} /><path d="M1 9h13v40H1zM36 9h13v24H36z" fill="#a8c4e4" /><path d="M1 20h48M1 30h48M1 40h48M13 9v40M25 9v40M37 9v40" stroke="#aaa" strokeWidth="2" /></g>,
  <g key="filled-map"><path d="M2 6 30 2 34 14 28 22 10 22 2 16z" fill={B} /><path d="M2 20 22 24 34 20 46 26 44 36 20 34 4 30z" fill="#ddd" /><path d="M12 34 44 36 38 48 16 46z" fill={BL} /><path d="M40 2h8v22h-8z" fill={Y} /><path d="M4 22 20 26 30 32 44 30M10 8l12 8" stroke="#333" strokeWidth="2.5" fill="none" /></g>,
  <g key="funnel"><path d="M1 4h48v6H1z" fill={Y} /><path d="M6 13h38v7H6z" fill={Y} /><path d="M10 22h30v7H10z" fill={B} /><path d="M14 32h22v6H14zM18 41h14v6H18z" fill={BL} /></g>,
  <g key="gauge"><path d="M5 38A20 20 0 0 1 14 18" stroke="#b9b3a0" strokeWidth="12" fill="none" /><path d="M11 20A20 20 0 0 1 35 15" stroke={Y} strokeWidth="12" fill="none" /><path d="M34 14A20 20 0 0 1 45 38" stroke="#5a9a80" strokeWidth="12" fill="none" /></g>,
  <g key="multi-card"><path d="M1 0h48v50H1z" fill="#fff" /><path d="M8 6h4v38H8z" fill="#777" /><path d="M17 6h16v5H17zM17 14h22v4H17z" fill={BL} /><path d="M17 26h14v4H17zM17 33h18v4H17z" fill="#9ab8dc" /></g>,
  <g key="card"><path d="M0 4h50v42H0z" fill="#fff" /><text x="25" y="28" fontSize="24" fontWeight="700" fill={BL} textAnchor="middle" textLength="43" lengthAdjust="spacingAndGlyphs">123</text><path d="M6 36h38" stroke="#888" strokeWidth="4" /></g>,
  <g key="kpi"><path d="M0 4h50v42H0z" fill="#fff" /><path d="M8 24 16 13 24 24z" fill="#5a9a80" /><path d="M27 14 43 14 35 25z" fill={R} /><path d="M8 34h34" stroke="#777" strokeWidth="4" /></g>,
  <g key="slicer"><path d="M1 2h44v46H1z" fill="#fff" /><path d="M1 2h44v7H1z" fill={BL} /><path d="M6 14h9v8H6z" fill={R} /><path d="M6 26h9v8H6z" fill={Y} /><path d="M6 37h9v8H6z" fill={R} /><path d="M24 20H52L42 32V47L34 42V32z" fill="#8f8f8f" stroke="#555" /></g>,
  <g key="donut" fill="none" strokeWidth="12"><circle cx="25" cy="24" r="19" stroke={BL} strokeDasharray="26 3" /><path d="M27 5A19 19 0 0 1 43 18" stroke={Y} /><path d="M9 14A19 19 0 0 1 22 5" stroke={B} /></g>,
  <g key="more" fill="#eee"><path d="M2 17h6v6H2zM20 17h6v6h-6zM38 17h6v6h-6z" /></g>,
];

function Gallery() {
  return (
    <div className="grid h-[117px] shrink-0 auto-rows-[22.7px] grid-cols-[repeat(6,26.4px)] pl-[8px] pt-[5.5px]">
      {GALLERY.map((g, i) => (
        <div key={i} className={i === 6 ? "-ml-[2px] -mt-[2px] flex h-[21px] w-[21px] items-center justify-center border-2 border-[#f0d24a] bg-[#1e1e1e]" : ""}>
          <svg className="block overflow-visible" width="17" height="17" viewBox="0 0 51 51">{g}</svg>
        </div>
      ))}
    </div>
  );
}

/* ------------------------------------------------------------------ panels */

function PanelHeader({ title }: { title: string }) {
  return (
    <div className="flex h-[44px] shrink-0 items-center justify-between bg-[#212121] px-[11px]">
      <h2 className="pt-[2px] text-[12.5px] font-semibold tracking-[0.08px] text-white">{title}</h2>
      <svg width="8" height="13" viewBox="0 0 8 13" fill="none" stroke="#ddd" strokeWidth="1.2"><path d="M1 1 6.6 6.5 1 12" /></svg>
    </div>
  );
}

function Cross() {
  return <svg width="9" height="9" viewBox="0 0 9 9" stroke="#999" strokeWidth="1"><path d="M.5.5 8.5 8.5M8.5.5.5 8.5" /></svg>;
}

function WellLabel({ children, className }: { children: React.ReactNode; className: string }) {
  return <div className={`flex items-center pl-[11px] text-[11.5px] tracking-[-0.14px] text-[#a3a3a3] ${className}`}>{children}</div>;
}

function Well({ children, className }: { children: React.ReactNode; className: string }) {
  return <div className={`ml-[3px] w-[161px] shrink-0 rounded-[3px] border border-dashed border-[#626262] bg-[#484848] p-[2.5px] ${className}`}>{children}</div>;
}

function FieldPill({ label }: { label: string }) {
  return (
    <div className="flex h-[22px] items-center rounded-[3px] border border-[#262626] bg-[#333] pl-[3px] pr-[4px]">
      <span className="flex-1 whitespace-nowrap text-[11.5px] tracking-[-0.31px] text-white">{label}</span>
      <svg className="mr-[8px] shrink-0" width="7" height="4" viewBox="0 0 7 4"><path d="M0 0h7L3.5 4z" fill="#8a8a8a" /></svg>
      <Cross />
    </div>
  );
}

function FilterPill({ label }: { label: string }) {
  return (
    <div className="mb-[2.3px] flex h-[25px] items-center rounded-[3px] border border-[#262626] bg-[#333] pb-[3px] pl-[7px] text-[11.5px] tracking-[-0.31px] text-white">{label}</div>
  );
}

function Select({ label, className = "" }: { label: string; className?: string }) {
  return (
    <div className={`flex h-[23px] w-[137px] items-center justify-between border border-black bg-[#444] pl-[5px] pr-[4px] text-[11.5px] tracking-[-0.29px] text-white ${className}`}>
      <span>{label}</span>
      <svg width="11" height="7" viewBox="0 0 11 7" fill="none" stroke="#222" strokeWidth="1.2"><path d="M.7.8 5.5 6 10.3.8" /></svg>
    </div>
  );
}

function Spin({ up }: { up?: boolean }) {
  return (
    <div className="flex w-[50px] justify-center">
      <svg width="8" height="5" viewBox="0 0 8 5" fill="none" stroke="#aaa"><path d={up ? "M.5 4.5 4 1l3.5 3.5" : "M.5.5 4 4 7.5.5"} /></svg>
    </div>
  );
}

function GridIcon({ className = "" }: { className?: string }) {
  return (
    <svg className={className} width="13" height="12" viewBox="0 0 13 12"><path d="M0 0h13v12H0z" fill="#ddd" /><path d="M0 3.3h13M0 6.2h13M0 9.1h13M4.3 3v9M8.7 3v9" stroke="#555" strokeWidth=".8" /></svg>
  );
}

function PageFilter() {
  return (
    <div className="h-[330px] rounded-t-[3px] border border-[#222] bg-[#333] pl-[7px] text-[11.5px] leading-[15px] tracking-[-0.29px] text-white">
      <div className="flex h-[19px] items-center">
        <span className="w-[103px]">obstime</span>
        <svg width="12" height="6" viewBox="0 0 12 6" fill="none" stroke="#ddd" strokeWidth="1.8"><path d="M.7 5.2 6 1.2 11.3 5.2" /></svg>
        <span className="ml-[10px]"><Cross /></span>
      </div>
      <div className="mt-px flex h-[16px] items-center whitespace-nowrap">
        <span className="w-[125px]">is after 11/28/2016 8:...</span>
        <svg width="12" height="12" viewBox="0 0 12 12" fill="none" stroke="#999"><path d="M7 .8 11.4 5 6 10.8H3.6L.8 8zM3.6 4.6 8 8.8" /></svg>
      </div>
      <div>Filter Type</div>
      <Select label="Advanced filtering" className="mt-[4px]" />
      <div className="mt-[13px]">Show items when the<br />value:</div>
      <Select label="is after" className="mt-[7px]" />
      <div className="mt-[2px] flex items-center">
        <div className="flex h-[22px] w-[115px] items-center overflow-hidden border border-black bg-[#444] px-[6px]">
          <span className="overflow-hidden whitespace-nowrap tracking-[-0.2px]">Mon Nov 28 2016 20:35</span>
        </div>
        <GridIcon className="ml-[4px]" />
      </div>
      <div className="mt-[6px] flex"><Spin up /><Spin up /></div>
      <div className="mt-[5px] flex items-center">
        <div className="flex h-[23px] w-[47px] items-center justify-center border border-black bg-[#444]">08</div>
        <span className="w-[3px] text-center">:</span>
        <div className="flex h-[23px] w-[47px] items-center justify-center border border-black bg-[#444]">35</div>
        <span className="ml-[1px] font-semibold tracking-[-0.6px] text-[#e8bc1c]">PM</span>
      </div>
      <div className="mt-[7px] flex"><Spin /><Spin /></div>
      <div className="mt-[12px] flex h-[17px] items-center">
        <svg width="13" height="13" viewBox="0 0 13 13"><circle cx="6" cy="6" r="5.2" fill="none" stroke="#ddd" strokeWidth="1.2" /><circle cx="6" cy="6" r="2.7" fill="#fff" /></svg>
        <span className="ml-[2px] w-[42px] pt-[2px]">And</span>
        <svg width="13" height="13" viewBox="0 0 13 13"><circle cx="6" cy="6" r="5.4" fill="none" stroke="#ddd" strokeWidth="1.2" /></svg>
        <span className="ml-[2px] pt-[2px]">Or</span>
      </div>
      <Select label="" className="mt-[3px]" />
      <div className="mt-[3px] pl-[83px] text-[#bbb]">Apply filter</div>
    </div>
  );
}

function VisualizationsPanel() {
  return (
    <aside className="flex h-[920px] w-[171px] shrink-0 flex-col overflow-hidden border-x border-black bg-[#444]">
      <PanelHeader title="Visualizations" />
      <Gallery />
      <div className="flex h-[33.5px] shrink-0 items-start bg-[#1f1f1f] pl-[11px]">
        <div className="flex h-[33.5px] w-[34px] flex-col items-center border-b-2 border-[#f2c80f] pt-[7px]">
          <svg width="20" height="20" viewBox="0 0 20 20" fill="none" stroke="#eee" strokeWidth="1.2"><path d="M0 1h16" strokeWidth="1.4" /><path d="M.6 4h18.8v4.5H.6zM.6 8.5h18.8v5H.6zM.6 13.5h18.8V18H.6z" strokeDasharray="1.8 1" /></svg>
        </div>
        <svg className="ml-[11.5px] mt-[7px]" width="18" height="20" viewBox="0 0 18 20" fill="none" stroke="#eee" strokeWidth="1.2"><path d="M2.6.8h12.6v4.6H2.6zM2.6 3H.8M15.2 3h2v5.5H9v3M7 11.5h4v7.7H7z" /></svg>
        <svg className="ml-[18px] mt-[7px]" width="21" height="21" viewBox="0 0 22 22" fill="none" stroke="#eee" strokeWidth="1.5"><circle cx="9.5" cy="9.5" r="8.2" /><path d="M15.5 15.5 20.5 20.5" strokeWidth="2" /><path d="M2 10.5 6.5 7 10 9.5 16.5 4M6 16v-5M9.5 17v-5M13 16V9" /></svg>
      </div>
      <div className="relative flex-1">
        <WellLabel className="h-[27px] pt-[1px]">Axis</WellLabel>
        <Well className="h-[35px]"><FieldPill label="obstime" /></Well>
        <WellLabel className="h-[30px] pt-[4px]">Legend</WellLabel>
        <Well className="h-[28px]"><FieldPill label="deviceid" /></Well>
        <WellLabel className="h-[30px] pt-[5px]">Values</WellLabel>
        <Well className="h-[28px]"><FieldPill label="Average of windspeed" /></Well>
        <WellLabel className="h-[30px] pt-[5px]">Tooltips</WellLabel>
        <Well className="flex h-[27px] items-center"><span className="pl-[7px] text-[11.5px] tracking-[-0.24px] text-[#a3a3a3]">Drag data fields here</span></Well>
        <div className="mt-[3px] flex h-[34px] items-center bg-[#212121] pl-[13.5px] pt-[6px] text-[12.5px] font-semibold tracking-[0.15px] text-white">Filters</div>
        <WellLabel className="h-[34px]">Visual level filters</WellLabel>
        <Well className="h-[93px] !pt-[1.5px]">
          <FilterPill label="Average of windspeed(All)" />
          <FilterPill label="deviceid(All)" />
          <FilterPill label="obstime(All)" />
        </Well>
        <WellLabel className="h-[33.5px]">Page level filters</WellLabel>
        <Well className="h-[340px] !pt-[1.5px]"><PageFilter /></Well>
        <div className="absolute right-0 top-0 h-[661px] w-[5.5px] rounded-[3px] bg-[#909090]/70" />
      </div>
    </aside>
  );
}

const FIELDS = [
  { name: "deviceid", on: true, sum: false },
  { name: "latitude", on: false, sum: true },
  { name: "longitude", on: false, sum: true },
  { name: "obstime", on: true, sum: false },
  { name: "windspeed", on: true, sum: true },
];

function FieldsPanel() {
  return (
    <aside className="flex h-[920px] w-[169px] shrink-0 flex-col bg-[#444]">
      <PanelHeader title="Fields" />
      <div className="h-[45px] shrink-0 border-b border-[#2a2a2a] pl-[9px] pt-[7px]">
        <div className="flex h-[28px] w-[151px] items-center border border-black bg-[#1f1f1f] pl-[11px] text-[12px] tracking-[-0.2px] text-[#777]">
          <svg width="15" height="15" viewBox="0 0 15 15" fill="none" stroke="#bbb" strokeWidth="1.1"><circle cx="9.5" cy="5.5" r="4.6" /><path d="M6.2 8.8.8 14.2" strokeWidth="1.5" /></svg>
          <span className="ml-[8px] pt-[1px]">Search</span>
        </div>
      </div>
      <div className="flex h-[33.5px] items-center pl-[8px] pt-[4px] text-[11.5px]">
        <svg width="7" height="7" viewBox="0 0 7 7"><path d="M6 .5V6H.5z" fill="#999" /></svg>
        <GridIcon className="ml-[8px]" />
        <span className="ml-[11px] tracking-[-0.3px] text-[#e0b81a]">iot-fsharp-demo</span>
      </div>
      {FIELDS.map((f) => (
        <div key={f.name} className="mb-[1.7px] ml-[5px] flex h-[19px] w-[158px] shrink-0 items-center rounded-[2px] border border-[#5a5a5a] bg-[#666] pl-[23px] text-[11.5px] text-white">
          {f.on ? (
            <svg width="12" height="12" viewBox="0 0 12 12"><path d="M0 0h12v12H0z" fill="#f2c80f" /><path d="M2.6 5.8 5 8.6 9.4 3.2" stroke="#222" strokeWidth="1.4" fill="none" /></svg>
          ) : (
            <span className="h-[12px] w-[12px] border-2 border-[#ccc] bg-white" />
          )}
          <svg className={f.sum ? "ml-[4px]" : "invisible ml-[4px]"} width="9" height="9" viewBox="0 0 9 9" fill="none" stroke="#aaa" strokeWidth="1.2"><path d="M8.3 2V.7H.8L4.8 4.5.8 8.3h7.5V7" /></svg>
          <span className="ml-[5.5px] tracking-[-0.33px]">{f.name}</span>
        </div>
      ))}
    </aside>
  );
}

function PageTabs() {
  return (
    <div className="flex h-[20px] shrink-0 overflow-hidden border-t border-white text-[11.5px] text-[#666]">
      <div className="flex w-[33px] justify-around border-r border-[#aaa] px-[3px] pt-[12px]">
        <svg width="4" height="8" viewBox="0 0 4 8"><path d="M4 0v8L0 4z" fill="#c4c4c4" /></svg>
        <svg width="4" height="8" viewBox="0 0 4 8"><path d="M0 0v8l4-4z" fill="#c4c4c4" /></svg>
      </div>
      <div className="h-[34px] w-[71px] bg-white pl-[20px] pt-[8px] leading-[17px] tracking-[-0.3px]">Page 1</div>
      <div className="flex w-[37px] justify-center bg-[#f2c80f] pt-[10px]">
        <svg width="11" height="11" viewBox="0 0 11 11" stroke="#6f6540" strokeWidth="2.4"><path d="M5.5 0v11M0 5.5h11" /></svg>
      </div>
    </div>
  );
}

export default function App() {
  return (
    <div className="flex h-[961px] w-[1600px] overflow-hidden bg-[#eaeaea] font-['Open_Sans','Noto_Sans',sans-serif]">
      <div className="w-[3px] shrink-0 bg-[#2b2b2b]" />
      <div className="flex w-[1597px] shrink-0 flex-col">
        <div className="h-[3px] shrink-0 bg-black" />
        <Toolbar />
        <div className="flex h-[920px] shrink-0">
          <main className="flex w-[1257px] shrink-0 flex-col">
            <div className="flex-1 pl-[7px] pt-[91px]">
              <div className="flex h-[718px] w-[1243px] items-start bg-white pl-[14px] shadow-[0_1px_6px_rgba(0,0,0,0.18)]">
                <MapVisual />
                <div className="w-[41px] shrink-0" />
                <ChartVisual />
              </div>
            </div>
            <PageTabs />
          </main>
          <VisualizationsPanel />
          <FieldsPanel />
        </div>
      </div>
    </div>
  );
}
